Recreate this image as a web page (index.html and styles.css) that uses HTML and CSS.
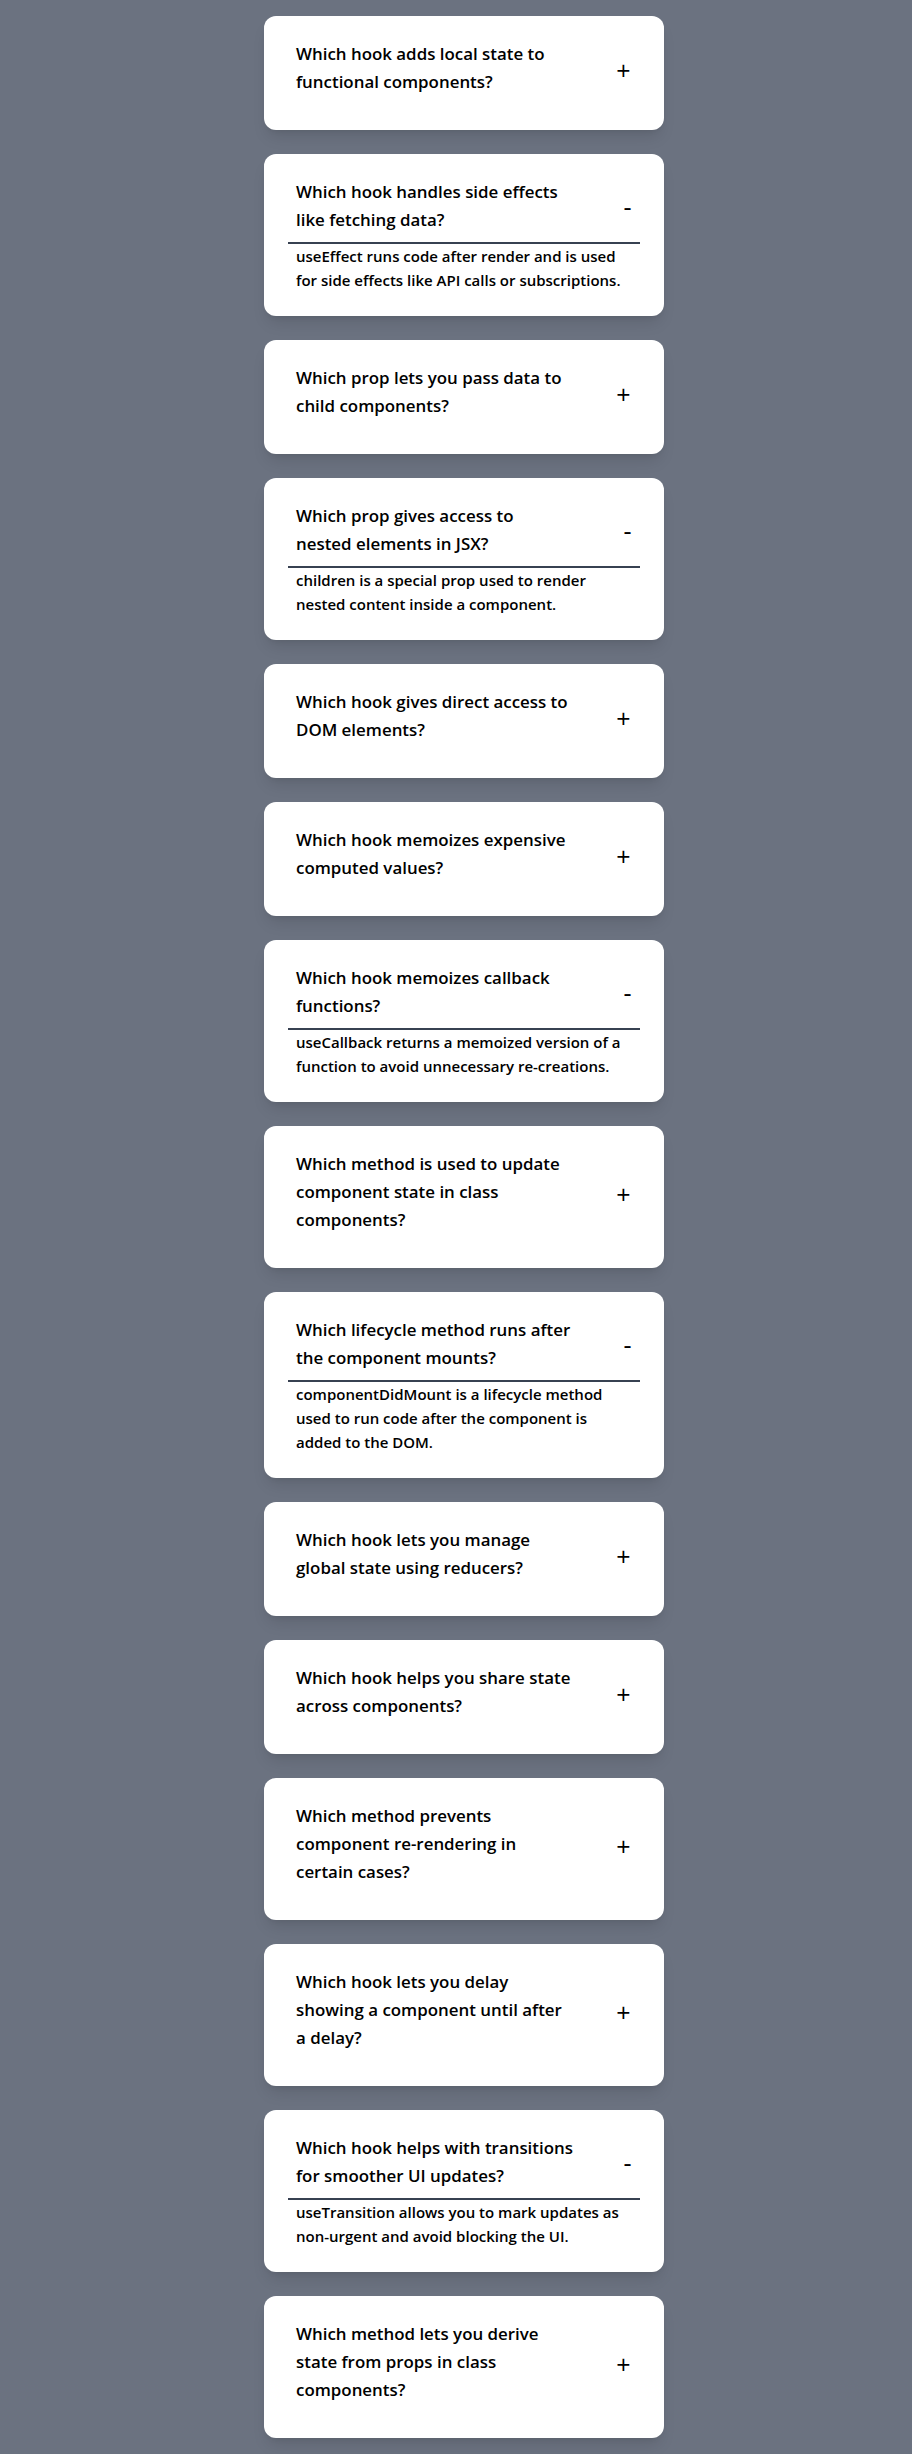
FILE: index.html
```html
<!DOCTYPE html>
<html lang="en">
<head>
<meta charset="utf-8">
<title>React FAQ</title>
<link rel="stylesheet" href="styles.css">
</head>
<body>
<main class="faq">
  <div class="card">
    <div class="card-head"><p class="question">Which hook adds local state to functional components?</p><span class="toggle">+</span></div>
  </div>
  <div class="card open">
    <div class="card-head"><p class="question">Which hook handles side effects like fetching data?</p><span class="toggle minus">-</span></div>
    <p class="answer">useEffect runs code after render and is used for side effects like API calls or subscriptions.</p>
  </div>
  <div class="card">
    <div class="card-head"><p class="question">Which prop lets you pass data to child components?</p><span class="toggle">+</span></div>
  </div>
  <div class="card open">
    <div class="card-head"><p class="question">Which prop gives access to<br>nested elements in JSX?</p><span class="toggle minus">-</span></div>
    <p class="answer">children is a special prop used to render nested content inside a component.</p>
  </div>
  <div class="card">
    <div class="card-head"><p class="question">Which hook gives direct access to DOM elements?</p><span class="toggle">+</span></div>
  </div>
  <div class="card">
    <div class="card-head"><p class="question">Which hook memoizes expensive computed values?</p><span class="toggle">+</span></div>
  </div>
  <div class="card open">
    <div class="card-head"><p class="question">Which hook memoizes callback functions?</p><span class="toggle minus">-</span></div>
    <p class="answer">useCallback returns a memoized version of a function to avoid unnecessary re-creations.</p>
  </div>
  <div class="card">
    <div class="card-head"><p class="question">Which method is used to update component state in class components?</p><span class="toggle">+</span></div>
  </div>
  <div class="card open">
    <div class="card-head"><p class="question">Which lifecycle method runs after the component mounts?</p><span class="toggle minus">-</span></div>
    <p class="answer">componentDidMount is a lifecycle method used to run code after the component is added to the DOM.</p>
  </div>
  <div class="card">
    <div class="card-head"><p class="question">Which hook lets you manage global state using reducers?</p><span class="toggle">+</span></div>
  </div>
  <div class="card">
    <div class="card-head"><p class="question">Which hook helps you share state across components?</p><span class="toggle">+</span></div>
  </div>
  <div class="card">
    <div class="card-head"><p class="question">Which method prevents component re-rendering in certain cases?</p><span class="toggle">+</span></div>
  </div>
  <div class="card">
    <div class="card-head"><p class="question">Which hook lets you delay showing a component until after a delay?</p><span class="toggle">+</span></div>
  </div>
  <div class="card open">
    <div class="card-head"><p class="question">Which hook helps with transitions for smoother UI updates?</p><span class="toggle minus">-</span></div>
    <p class="answer">useTransition allows you to mark updates as non-urgent and avoid blocking the UI.</p>
  </div>
  <div class="card">
    <div class="card-head"><p class="question">Which method lets you derive state from props in class components?</p><span class="toggle">+</span></div>
  </div>
</main>
</body>
</html>
```
FILE: styles.css
```css
* { box-sizing: border-box; }

html, body {
  margin: 0;
  background: #6b7280;
}

body {
  font-family: "Open Sans", "Noto Sans", sans-serif;
  color: #000;
  min-height: 2454px;
}

.faq {
  display: flex;
  flex-direction: column;
  align-items: center;
  gap: 24px;
  padding: 16px 0 24px 16px;
}

.card {
  width: 400px;
  background: #fff;
  border-radius: 12px;
  padding: 24px;
  box-shadow: 0 10px 15px -3px rgba(0, 0, 0, 0.1), 0 4px 6px -4px rgba(0, 0, 0, 0.1);
}

.card-head {
  display: flex;
  justify-content: space-between;
  align-items: center;
  padding: 0 8px 8px;
  border-bottom: 2px solid transparent;
}

.open .card-head {
  border-bottom-color: #374151;
}

.question {
  margin: 0;
  max-width: 279px;
  font-size: 16.9px;
  line-height: 28px;
  font-weight: 600;
}

.toggle {
  font-size: 25px;
  line-height: 1;
  font-weight: 400;
  margin-top: 5px;
  margin-right: 1.5px;
}

.toggle.minus {
  margin-top: 0;
  margin-right: 0.5px;
}

.answer {
  margin: 0;
  padding: 0 8px;
  max-width: 348px;
  font-size: 15px;
  line-height: 24px;
  font-weight: 600;
}
```
